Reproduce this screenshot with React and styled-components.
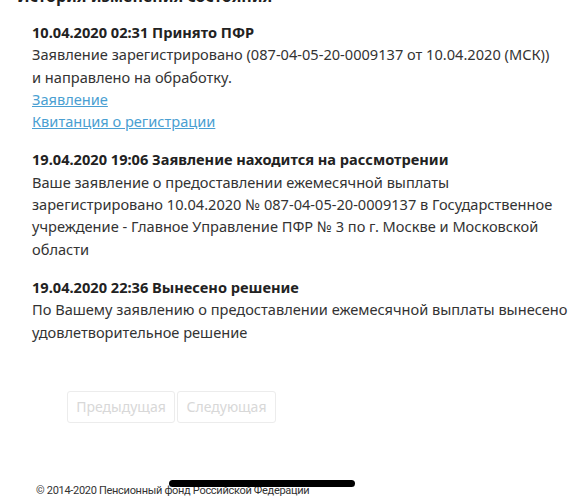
import styled, { createGlobalStyle } from "styled-components";

const GlobalStyle = createGlobalStyle`
  html, body {
    margin: 0;
    padding: 0;
    background: #fff;
  }
  body {
    font-family: "Noto Sans", "Open Sans", sans-serif;
    color: #2b2b2b;
    overflow: hidden;
  }
`;

const Page = styled.div`
  position: relative;
  width: 578px;
  height: 500px;
  overflow: hidden;
`;

const Title = styled.h2`
  margin: -14px 0 0 17px;
  font-size: 16px;
  line-height: 20px;
  font-weight: 700;
  color: #1f1f1f;
`;

const List = styled.div`
  display: flex;
  flex-direction: column;
  gap: 16px;
  padding: 15px 0 0 32px;
`;

const Entry = styled.div`
  display: flex;
  flex-direction: column;
`;

const Head = styled.div`
  font-size: 14.6px;
  line-height: 22.3px;
  font-weight: 700;
  color: #222;
`;

const Text = styled.div`
  font-size: 14.6px;
  line-height: 22.3px;
  color: #333;
  white-space: nowrap;
`;

const Link = styled.a`
  font-size: 14.6px;
  line-height: 22.3px;
  color: #4a9fd2;
  text-decoration: underline;
  align-self: flex-start;
`;

const Pager = styled.div`
  display: flex;
  gap: 2px;
  margin: 48px 0 0 67px;
`;

const PageButton = styled.button`
  height: 32px;
  width: ${p => p.$w}px;
  border: 1px solid #ececec;
  border-radius: 3px;
  background: #fff;
  color: #d8d8d8;
  font-family: "Noto Sans", "Open Sans", sans-serif;
  font-size: 14px;
  padding: 0;
`;

const Footer = styled.div`
  margin: 61px 0 0 36px;
  font-family: "Roboto", "Noto Sans", sans-serif;
  font-size: 11px;
  line-height: 14px;
  letter-spacing: -0.3px;
  color: #333;
`;

const HomeBar = styled.div`
  position: absolute;
  left: 169px;
  top: 480px;
  width: 186px;
  height: 7px;
  border-radius: 4px;
  background: #000;
`;

const entries = [
  {
    head: "10.04.2020 02:31 Принято ПФР",
    lines: [
      "Заявление зарегистрировано (087-04-05-20-0009137 от 10.04.2020 (МСК))",
      "и направлено на обработку.",
    ],
    links: ["Заявление", "Квитанция о регистрации"],
  },
  {
    head: "19.04.2020 19:06 Заявление находится на рассмотрении",
    lines: [
      "Ваше заявление о предоставлении ежемесячной выплаты",
      "зарегистрировано 10.04.2020 № 087-04-05-20-0009137 в Государственное",
      "учреждение - Главное Управление ПФР № 3 по г. Москве и Московской",
      "области",
    ],
  },
  {
    head: "19.04.2020 22:36 Вынесено решение",
    lines: [
      "По Вашему заявлению о предоставлении ежемесячной выплаты вынесено",
      "удовлетворительное решение",
    ],
  },
];

export default function App() {
  return (
    <>
      <GlobalStyle />
      <Page>
        <Title>История изменения состояния</Title>
        <List>
          {entries.map((e) => (
            <Entry key={e.head}>
              <Head>{e.head}</Head>
              {e.lines.map((l) => <Text key={l}>{l}</Text>)}
              {e.links && e.links.map((l) => <Link key={l} href="#">{l}</Link>)}
            </Entry>
          ))}
        </List>
        <Pager>
          <PageButton $w={108} disabled>Предыдущая</PageButton>
          <PageButton $w={99} disabled>Следующая</PageButton>
        </Pager>
        <Footer>© 2014-2020 Пенсионный фонд Российской Федерации</Footer>
        <HomeBar />
      </Page>
    </>
  );
}
